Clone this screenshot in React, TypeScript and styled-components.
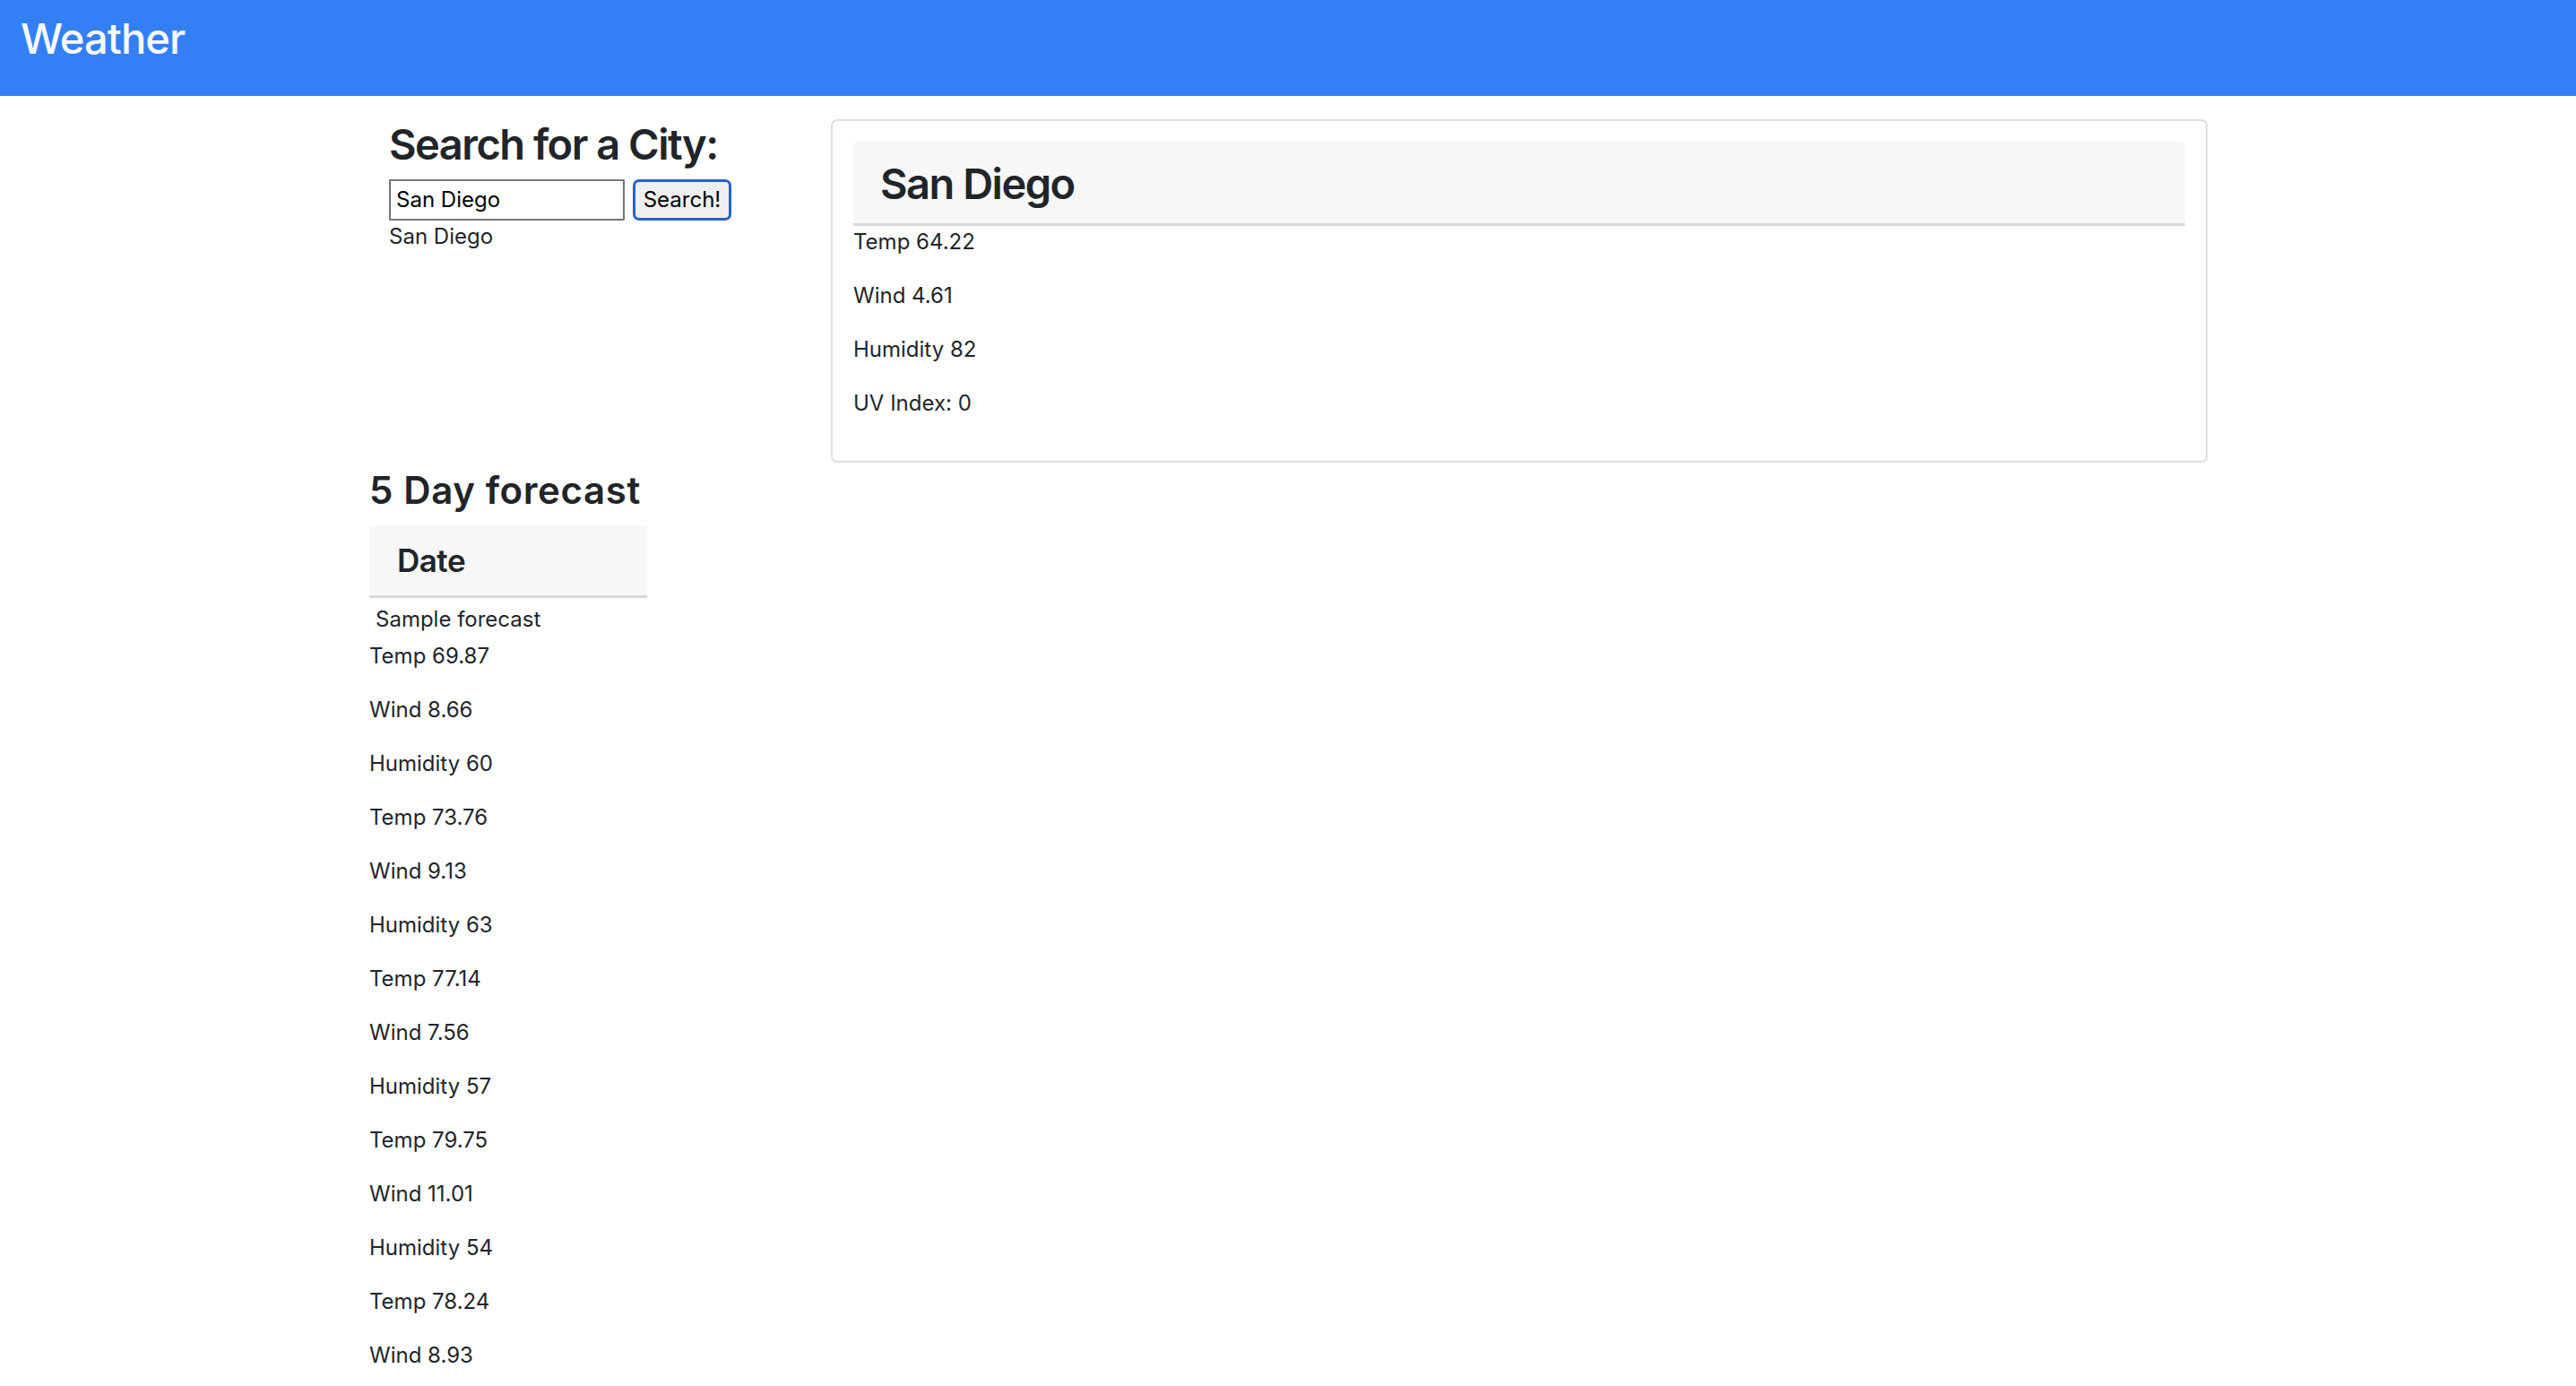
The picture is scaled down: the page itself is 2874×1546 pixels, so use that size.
import React from "react";
import styled, { createGlobalStyle } from "styled-components";

const GlobalStyle = createGlobalStyle`
  html, body { margin: 0; padding: 0; overflow: hidden; background: #fff; }
  body {
    font-family: Inter, "Noto Sans", "Liberation Sans", sans-serif;
    font-size: 24px;
    line-height: 36px;
    color: #212529;
  }
  * { box-sizing: border-box; }
`;

const NavBar = styled.nav`
  height: 107px;
  background: #337ff6;
  display: flex;
  align-items: flex-start;
  padding: 14px 23px 0;
`;

const Brand = styled.span`
  color: #f8f9fa;
  font-size: 47px;
  line-height: 57px;
  font-weight: 500;
  letter-spacing: -0.9px;
`;

const Main = styled.main`
  padding: 25px 0 0 412px;
`;

const TopRow = styled.div`
  display: flex;
  align-items: flex-start;
`;

const SearchCol = styled.section`
  width: 515px;
  padding-left: 22px;
`;

const H2 = styled.h2`
  margin: 0 0 10px;
  font-size: 47px;
  line-height: 57.6px;
  font-weight: 600;
  letter-spacing: -1.5px;
`;

const CardTitle = styled(H2)`
  margin: 0;
`;

const SearchForm = styled.form`
  display: flex;
  align-items: center;
  gap: 9px;
  height: 46px;
`;

const Input = styled.input`
  width: 263px;
  height: 46px;
  border: 2px solid #767676;
  border-radius: 1px;
  padding: 0 6px;
  font-family: Inter, "Noto Sans", sans-serif;
  font-size: 24px;
  color: #000;
  outline: none;
`;

const Button = styled.button`
  width: 110px;
  height: 46px;
  border: 3px solid #2762c9;
  border-radius: 7px;
  background: #efefef;
  font-family: Inter, "Noto Sans", sans-serif;
  font-size: 24px;
  color: #000;
  padding: 0;
`;

const HistoryItem = styled.div`
  font-size: 24px;
  line-height: 36px;
`;

const Card = styled.section`
  width: 1536px;
  margin-top: 1px;
  border: 2px solid #dfdfdf;
  border-radius: 7px;
  padding: 23px 23px 22px;
`;

const CardHeader = styled.div`
  background: #f7f7f7;
  border-bottom: 3px solid #d8d8d8;
  border-radius: 5px 5px 0 0;
  padding: 18px 30px 15px;
`;

const Stat = styled.p`
  margin: 0 0 24px;
  font-size: 24px;
  line-height: 36px;
`;

const Forecast = styled.section`
  width: 310px;
  margin-top: 6px;
`;

const H3 = styled.h3`
  margin: 0 0 14px;
  font-size: 42px;
  line-height: 50.4px;
  font-weight: 600;
  letter-spacing: 0.6px;
  white-space: nowrap;
`;

const DateHeader = styled.div`
  background: #f7f7f7;
  border-bottom: 3px solid #d8d8d8;
  padding: 18px 31px 17px;
`;

const H4 = styled.h4`
  margin: 0;
  font-size: 35px;
  line-height: 43px;
  font-weight: 600;
  letter-spacing: -0.5px;
`;

const SampleText = styled.div`
  padding: 6px 7px 5px;
  font-size: 24px;
  line-height: 36px;
`;

type Day = { temp: string; wind: string; humidity?: string };

const current = { city: "San Diego", temp: "64.22", wind: "4.61", humidity: "82", uv: "0" };

const forecast: Day[] = [
  { temp: "69.87", wind: "8.66", humidity: "60" },
  { temp: "73.76", wind: "9.13", humidity: "63" },
  { temp: "77.14", wind: "7.56", humidity: "57" },
  { temp: "79.75", wind: "11.01", humidity: "54" },
  { temp: "78.24", wind: "8.93" },
];

export default function App() {
  return (
    <>
      <GlobalStyle />
      <NavBar>
        <Brand>Weather</Brand>
      </NavBar>
      <Main>
        <TopRow>
          <SearchCol>
            <H2>Search for a City:</H2>
            <SearchForm onSubmit={(e) => e.preventDefault()}>
              <Input defaultValue="San Diego" />
              <Button type="submit">Search!</Button>
            </SearchForm>
            <HistoryItem>San Diego</HistoryItem>
          </SearchCol>
          <Card>
            <CardHeader>
              <CardTitle>{current.city}</CardTitle>
            </CardHeader>
            <Stat>Temp {current.temp}</Stat>
            <Stat>Wind {current.wind}</Stat>
            <Stat>Humidity {current.humidity}</Stat>
            <Stat>UV Index: {current.uv}</Stat>
          </Card>
        </TopRow>
        <Forecast>
          <H3>5 Day forecast</H3>
          <DateHeader>
            <H4>Date</H4>
          </DateHeader>
          <SampleText>Sample forecast</SampleText>
          {forecast.map((d, i) => (
            <React.Fragment key={i}>
              <Stat>Temp {d.temp}</Stat>
              <Stat>Wind {d.wind}</Stat>
              {d.humidity && <Stat>Humidity {d.humidity}</Stat>}
            </React.Fragment>
          ))}
        </Forecast>
      </Main>
    </>
  );
}
